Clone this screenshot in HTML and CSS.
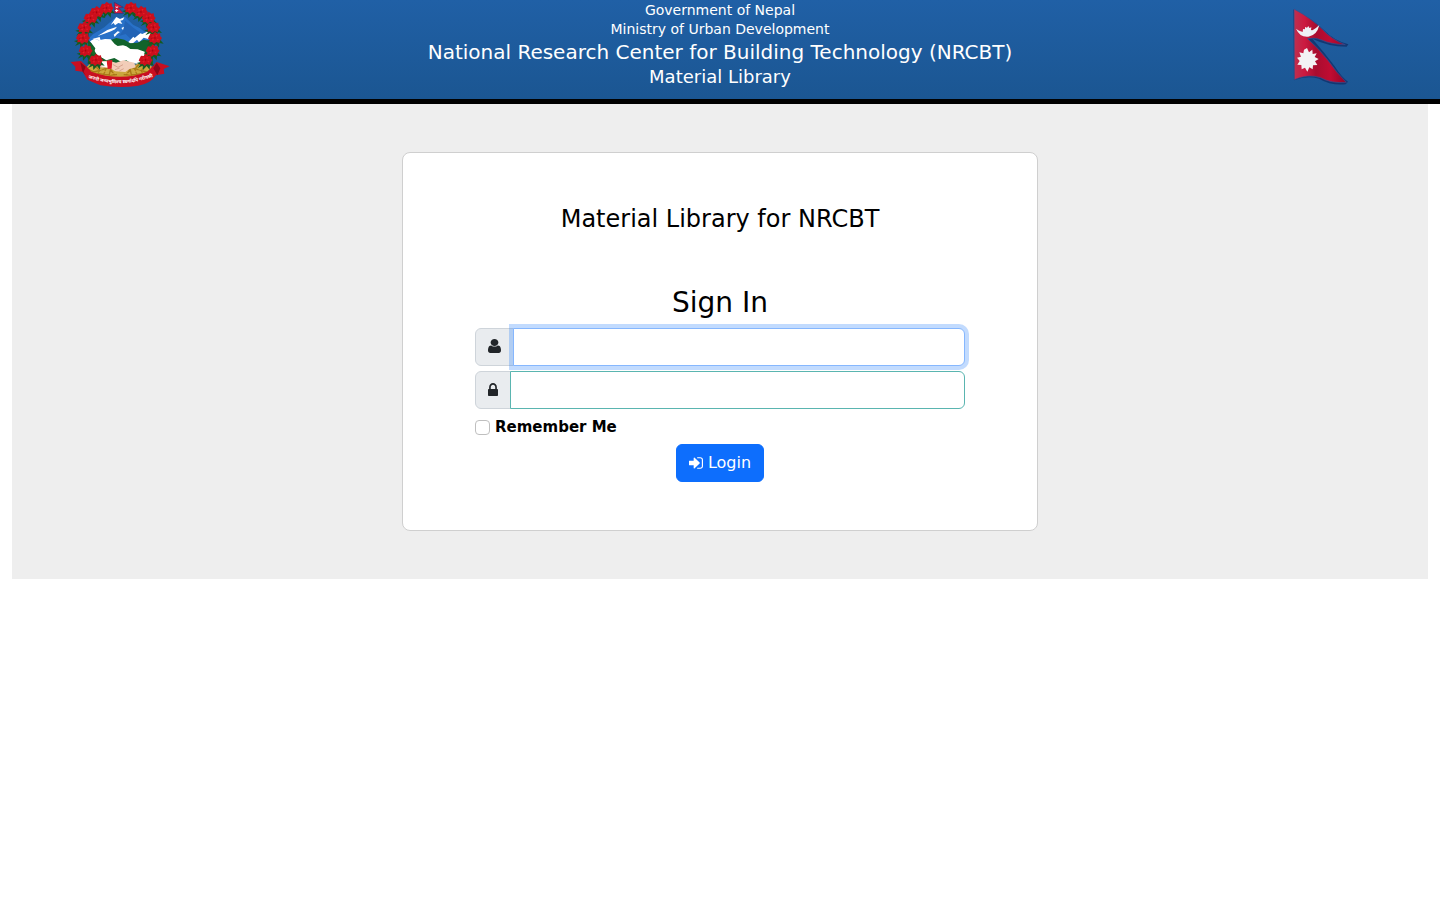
FILE: index.html
```
<!DOCTYPE html>
<html lang="en">
<head>
<meta charset="utf-8">
<title>Material Library</title>
<meta name="viewport" content="width=device-width, initial-scale=1">
<link rel="stylesheet" href="styles.css">
</head>
<body>
<header class="banner">
  <svg class="emblem" viewBox="0 0 330 264" role="img" aria-label="Emblem of Nepal">
    <defs>
      <g id="bloom">
        <path fill="#145a20" d="M-6 4L-27 9L-16 14L-24 24L-9 17L-8 30L3 18L12 29L13 15L26 17L14 4Z"/>
        <path fill="#cc0f1c" d="M-19-3L-14-13L-6-12L0-19L8-13L15-14L16-5L21 0L16 7L13 15L4 12L-3 18L-9 12L-17 13L-16 5L-21 2Z"/>
        <path fill="#e4202a" d="M-10-5L-5-8L-3-3ZM2-9L8-8L4-2ZM5 3L12 3L8 8ZM-10 4L-3 3L-6 9Z"/>
        <path fill="#a5040f" d="M-3-1L1-4L2 1L0 4ZM-13 2L-8 0L-10 3Z"/>
      </g>
      <g id="wheat" fill="none" stroke="#a97817" stroke-width="4">
        <path d="M68 207Q108 229 156 224M72 219Q116 210 146 197M90 198L104 211L96 224M110 193L123 207L115 226M132 191L137 207L132 228M150 204L138 211L150 226"/>
        <path stroke="#e0af3c" stroke-width="2" d="M73 205L88 211M83 222L100 216M111 217L128 212M122 201L135 200M101 207L112 210M135 224L152 218"/>
      </g>
      <path id="motto" d="M60 230Q165 272 274 226"/>
      <clipPath id="scene"><path d="M70 72Q112 38 165 40Q219 38 260 74L265 190Q220 226 165 230Q106 228 68 190Z"/></clipPath>
    </defs>
    <g clip-path="url(#scene)">
      <path fill="#2871c8" d="M70 116L84 103L118 82L153 50L166 56L180 50L204 74L224 84L240 97L262 126V145H70Z"/>
      <path fill="#2263b5" d="M180 62L206 84L228 99L200 120L182 102L162 108L176 88Z"/>
      <path fill="#fff" d="M154 51L165 57L178 52L174 60L166 62L172 72L160 69L150 76L146 69L137 75ZM127 90L156 80L150 88L138 94L118 101L98 108ZM146 104L158 94L165 96L156 103L149 111ZM169 84L177 80L174 90ZM188 128L205 110L209 114L226 100L232 102L246 95L260 100L252 118L236 113L222 127L216 119L202 131ZM82 117L104 111L107 121Z"/>
      <path fill="#11632b" d="M67 128L112 128L137 120L154 114L178 119L196 130L218 128L236 119L264 124V190H68Z"/>
      <path fill="#fff" d="M75 124L88 116L101 121L120 117L137 118L149 132L158 138L174 136L184 139L196 147L218 148L239 155L236 188L221 192L195 188L184 181L168 185L148 174L124 181L105 170L87 158L91 145Z"/>
      <path fill="#176827" d="M67 132L84 145L96 165L117 178L95 198L65 180ZM244 143L270 135V190L230 205L240 168Z"/>
    </g>
    <path fill="#caa73d" d="M60 206L76 190L111 193L166 207L218 192L251 193L270 207L257 224Q166 254 72 225Z"/>
    <use href="#wheat"/>
    <use href="#wheat" transform="translate(332 0) scale(-1 1)"/>
    <path fill="#f2cdb8" d="M101 184L132 182L153 188L175 181L208 188L212 202L194 207L181 216L151 214L133 204L104 202Z"/>
    <path fill="none" stroke="#c98f78" stroke-width="2" d="M143 193L159 202L174 194M150 209L164 204M163 213L176 206"/>
    <path fill="#e01825" d="M125 182L142 180L140 206L128 207ZM98 184L110 185L109 199L97 194Z"/>
    <path fill="#fff" d="M111 186L125 185L127 202L109 199Z"/>
    <path fill="#c90f21" d="M17 186L48 183L67 202L79 215Q166 246 247 215L275 186L314 199L296 207L298 221L273 226Q257 251 220 257Q166 266 106 256L67 239L53 215L31 212L31 200Z"/>
    <path fill="#8b0719" d="M46 187L62 200L56 215L62 226L52 214ZM275 188L265 205L277 226L286 205Z"/>
    <text class="motto" lang="sa"><textPath href="#motto" startOffset="50%" text-anchor="middle">जननी जन्मभूमिश्च स्वर्गादपि गरीयसी</textPath></text>
    <use href="#bloom" x="125" y="24"/><use href="#bloom" x="95" y="37"/><use href="#bloom" x="77" y="54"/><use href="#bloom" x="58" y="83"/><use href="#bloom" x="54" y="114"/><use href="#bloom" x="62" y="152"/><use href="#bloom" x="93" y="180"/>
    <use href="#bloom" x="198" y="24"/><use href="#bloom" x="228" y="36"/><use href="#bloom" x="251" y="54"/><use href="#bloom" x="265" y="82"/><use href="#bloom" x="270" y="114"/><use href="#bloom" x="263" y="152"/><use href="#bloom" x="242" y="180"/>
    <path fill="#d81738" stroke="#263779" stroke-width="2" d="M148 7L175 22L161 24L176 40H148Z"/>
    <path fill="#fff" d="M151 17Q155 24 160 17L158 23H153ZM155 27L157 30L161 31L157 34L155 37L152 34L149 31L153 30Z"/>
  </svg>
  <div class="titles">
    <p class="line">Government of Nepal</p>
    <p class="line">Ministry of Urban Development</p>
    <h1 class="center-name">National Research Center for Building Technology (NRCBT)</h1>
    <p class="library">Material Library</p>
  </div>
  <svg class="flag" viewBox="0 0 210 258" role="img" aria-label="Flag of Nepal">
    <defs>
      <linearGradient id="cloth" x1="0" y1="0" x2="1" y2="0">
        <stop offset="0" stop-color="#bd3050"/><stop offset=".2" stop-color="#cc1a40"/><stop offset=".42" stop-color="#a80d30"/><stop offset=".7" stop-color="#c00c32"/><stop offset="1" stop-color="#900529"/>
      </linearGradient>
    </defs>
    <path fill="#102c65" opacity=".75" d="M25 16L31 20Q85 45 119 80Q145 108 190 121L185 128Q130 128 82 104Q119 146 149 187Q173 224 189 233L182 241Q137 245 102 224Q66 213 27 229Z"/>
    <path fill="url(#cloth)" stroke="#334f91" stroke-width="2" d="M27 15Q79 43 112 76Q140 107 181 122Q137 121 110 108Q91 99 68 104Q102 134 130 170Q155 207 184 235Q139 239 107 221Q69 209 28 227Z"/>
    <path fill="#eef1f5" d="M33 74Q48 86 67 84Q86 80 103 63Q96 94 70 98Q45 101 33 74Z"/>
    <path fill="#eef1f5" d="M53 84L54 75L60 76L60 69L66 71L70 66L73 72L79 70L78 78L83 80L78 86L63 90Z"/>
    <path fill="#f3f2f4" d="M66 132L72 145L82 137L83 150L95 148L89 159L101 165L90 172L97 183L84 184L83 196L73 190L67 203L60 191L50 196L49 183L37 182L44 171L36 161L48 158L43 145L55 148L57 137Z"/>
  </svg>
</header>
<main class="page">
  <section class="card">
    <h2 class="card-title">Material Library for NRCBT</h2>
    <form class="login">
      <h3 class="sign-in">Sign In</h3>
      <div class="field">
        <label class="addon" for="username" aria-label="Username">
          <svg class="icon-user" viewBox="0 0 1280 1536" preserveAspectRatio="none" aria-hidden="true"><path transform="translate(0 1408) scale(1 -1)" d="M1280 137q0-109-62.500-187t-150.500-78h-854q-88 0-150.500 78t-62.500 187q0 85 8.500 160.500t31.500 152 58.500 131 94 89 134.500 34.500q131-128 313-128t313 128q76 0 134.500-34.500t94-89 58.500-131 31.500-152 8.500-160.500zM1024 1024q0-159-112.500-271.500t-271.500-112.500-271.500 112.500-112.500 271.500 112.500 271.500 271.500 112.500 271.500-112.500 112.500-271.500z"/></svg>
        </label>
        <input class="control control-active" id="username" type="text" name="username" autocomplete="off">
      </div>
      <div class="field">
        <label class="addon" for="password" aria-label="Password">
          <svg class="icon-lock" viewBox="0 0 1152 1408" preserveAspectRatio="none" aria-hidden="true"><path transform="translate(0 1408) scale(1 -1)" d="M320 768h512v192q0 106-75 181t-181 75-181-75-75-181v-192zM1152 672v-576q0-40-28-68t-68-28h-960q-40 0-68 28t-28 68v576q0 40 28 68t68 28h32v192q0 184 132 316t316 132 316-132 132-316v-192h32q40 0 68-28t28-68z"/></svg>
        </label>
        <input class="control" id="password" type="password" name="password" autocomplete="off">
      </div>
      <div class="remember">
        <input class="check" id="remember" type="checkbox" name="remember">
        <label for="remember">Remember Me</label>
      </div>
      <button class="submit" type="submit">
        <svg class="icon-enter" viewBox="0 0 1536 1280" aria-hidden="true"><path transform="translate(0 1280) scale(1 -1)" d="M1184 640q0-26-19-45l-544-544q-19-19-45-19t-45 19-19 45v288h-448q-26 0-45 19t-19 45v384q0 26 19 45t45 19h448v288q0 26 19 45t45 19 45-19l544-544q19-19 19-45zM1536 992v-704q0-119-84.500-203.500t-203.500-84.500h-320q-13 0-22.500 9.500t-9.500 22.500q-1 4-1 20t-.5 26.500 3 23.500 10 19.500 20.500 6.500h320q66 0 113 47t47 113v704q0 66-47 113t-113 47h-312l-11.500 1t-11.500 3-8 5.500-7 9-2 13.500q-1 4-1 20t-.5 26.500 3 23.500 10 19.500 20.500 6.500h320q119 0 203.500-84.500t84.500-203.500z"/></svg>
        Login
      </button>
    </form>
  </section>
</main>
</body>
</html>
```
FILE: styles.css
```
* {
  box-sizing: border-box;
}

body {
  margin: 0;
  background: #fff;
  color: #000;
  font: 16px/24px "DejaVu Sans", sans-serif;
}

h1, h2, h3, p {
  margin: 0;
  font-weight: 400;
}

.banner {
  display: grid;
  grid-template-columns: 240px 1fr 240px;
  justify-items: center;
  padding-bottom: 9px;
  border-bottom: 5px solid #000;
  background: linear-gradient(#2060a6, #1b5692);
  color: #fff;
}

.emblem {
  width: 110px;
  height: 88px;
}

.flag {
  width: 70px;
  height: 86px;
  margin-top: 4px;
}

.titles {
  padding-top: 1px;
  text-align: center;
}

.line {
  font-size: 14px;
  line-height: 19px;
}

.center-name {
  font-size: 20px;
  line-height: 27px;
}

.library {
  font-size: 18px;
  line-height: 21px;
}

.motto {
  fill: #fff;
  font: bold 14px "Noto Sans", "Noto Sans Devanagari", sans-serif;
}

.page {
  margin: 0 12px;
  padding: 48px 12px;
  background: #eee;
}

.card {
  max-width: 636px;
  margin: 0 auto;
  padding: 48px 72px;
  border: 1px solid #cfcfcf;
  border-radius: 8px;
  background: #fff;
}

.card-title {
  margin-bottom: 48px;
  font-size: 24px;
  line-height: 36px;
  text-align: center;
}

.login {
  display: flex;
  flex-direction: column;
}

.sign-in {
  margin-bottom: 8px;
  font-size: 28px;
  line-height: 35px;
  text-align: center;
}

.field {
  display: flex;
  height: 38px;
  margin-bottom: 5px;
}

.addon {
  display: flex;
  align-items: center;
  padding: 0 12px 2px;
  border: 1px solid #ced4da;
  border-radius: 6px 0 0 6px;
  background: #e9ecef;
}

.addon svg {
  fill: #212529;
}

.icon-user {
  width: 13px;
  height: 14px;
}

.icon-lock {
  width: 10px;
  height: 13px;
}

.control {
  flex: 1;
  min-width: 0;
  margin-left: -1px;
  padding: 6px 12px;
  border: 1px solid #5ab5b0;
  border-radius: 0 6px 6px 0;
  outline: 0;
  background: #fff;
  font: inherit;
}

.control:focus,
.control-active {
  border-color: #86b7fe;
  box-shadow: 0 0 0 4px rgba(13, 110, 253, .25);
}

.remember {
  display: flex;
  align-items: center;
  gap: 5px;
  margin-bottom: 3px;
  font-size: 15px;
  font-weight: 700;
  line-height: 27px;
}

.check {
  appearance: none;
  width: 15px;
  height: 15px;
  margin: 0;
  border: 1px solid #bfbfbf;
  border-radius: 4px;
  background: #fff;
}

.check:checked {
  border-color: #0d6efd;
  background: #0d6efd;
}

.submit {
  display: flex;
  align-items: center;
  align-self: center;
  gap: 5px;
  padding: 6px 12px;
  border: 1px solid #0d6efd;
  border-radius: 6px;
  background: #0d6efd;
  color: #fff;
  font: inherit;
  cursor: pointer;
}

.icon-enter {
  width: 14px;
  height: 12px;
  fill: #fff;
}
```
